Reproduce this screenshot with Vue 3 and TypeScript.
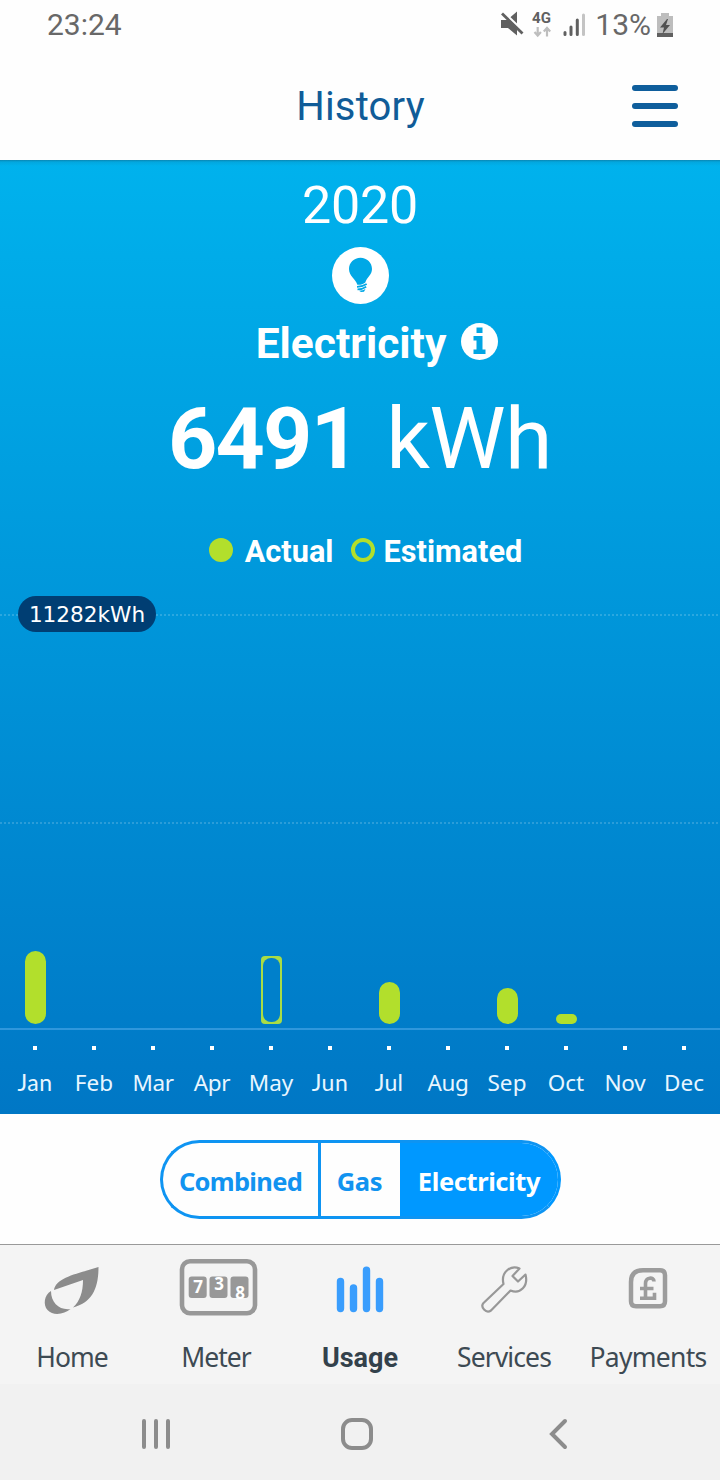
<script setup lang="ts">
interface Month {
  name: string
  height: number
  estimated?: boolean
  spacing: number
}

const months: Month[] = [
  { name: 'Jan', height: 73, spacing: 0.5 },
  { name: 'Feb', height: 0, spacing: 0.1 },
  { name: 'Mar', height: 0, spacing: -0.4 },
  { name: 'Apr', height: 0, spacing: -0.3 },
  { name: 'May', height: 68, estimated: true, spacing: 0 },
  { name: 'Jun', height: 0, spacing: 0.5 },
  { name: 'Jul', height: 42, spacing: 0.3 },
  { name: 'Aug', height: 0, spacing: -0.3 },
  { name: 'Sep', height: 36, spacing: 0.1 },
  { name: 'Oct', height: 10, spacing: 0 },
  { name: 'Nov', height: 0, spacing: -0.2 },
  { name: 'Dec', height: 0, spacing: 0 },
]
</script>

<template>
  <main class="screen">
    <div class="status">
      <span class="clock">23:24</span>
      <svg class="status-icons" width="90" height="40" viewBox="498 5 90 40">
        <g fill="#606060">
          <path d="M501 20h6l10-8.500v24l-9-7.500h-7z" />
          <path d="M503.500 12L523.500 31.500" stroke="#fefefe" stroke-width="2.500" />
          <path d="M502 13.500L522.500 33.500" stroke="#606060" stroke-width="2.800" />
        </g>
        <text x="541.500" y="23" text-anchor="middle" class="network">4G</text>
        <g stroke="#bebebe" stroke-width="2.200" fill="none">
          <path d="M537.700 27v8.500M534.500 32l3.200 3.500 3.200-3.500M547 36.500V28M543.800 31.500l3.200-3.500 3.200 3.500" />
        </g>
        <g stroke-width="3" stroke-linecap="round">
          <path d="M565 32.500v2M571 27v7.500M577.300 20v14.500" stroke="#606060" />
          <path d="M583.500 15v19.500" stroke="#c4c4c4" />
        </g>
      </svg>
      <span class="percent">13%</span>
      <svg class="battery" width="16" height="24" viewBox="0 0 16 24">
        <path d="M4 0h8v3h4v21H0V3h4z" fill="#bdbdbd" />
        <path d="M0 20h16v4H0z" fill="#606060" />
        <path d="M10 6L3 14.500h4L5.500 21 13 12H9l2-6z" fill="#505050" />
      </svg>
    </div>

    <header class="header">
      <h1>History</h1>
      <div class="burger"><i></i><i></i><i></i></div>
    </header>

    <section class="hero">
      <div class="year">2020</div>
      <svg class="bulb" width="57" height="57" viewBox="0 0 57 57">
        <circle cx="28.500" cy="28.500" r="28.500" fill="#fff" />
        <path d="M28.500 10.800C22 10.800 17 15.800 17 22c0 7.500 7 10 8.300 15.800 3 .3 5.700-.4 8-2.200 1.500-5.300 6.700-7.600 6.700-13.600 0-6.200-5-11.200-11.500-11.200z" fill="#00a8e6" />
        <path d="M25 39.800q5.200 0 9.700-2.800M25.500 42.400q4.700 0 8.700-2.700" fill="none" stroke="#00a8e6" stroke-width="1.700" />
        <path d="M27 43.700q4 0 6.500-1.700l-1.500 2.700-3 .3z" fill="#00a8e6" />
      </svg>
      <div class="fuel">
        <span>Electricity</span>
        <svg width="37" height="37" viewBox="0 0 37 37">
          <circle cx="18.500" cy="18.500" r="18.500" fill="#fff" />
          <path d="M15.500 4.500h6v5.500h-6zM12.500 13h9v13.500h3V31h-12v-4.500h3v-9h-3z" fill="#00a5e4" />
        </svg>
      </div>
      <div class="total"><b>6491</b><span>kWh</span></div>
      <div class="legend">
        <i class="dot"></i><span class="actual">Actual</span>
        <i class="dot ring"></i><span class="estimated">Estimated</span>
      </div>

      <div class="chart">
        <div class="ceiling"><span class="pill">11282kWh</span></div>
        <div class="middle"></div>
        <div class="plot">
          <div v-for="m in months" :key="m.name" class="slot">
            <div
              v-if="m.height"
              class="bar"
              :class="{ outline: m.estimated }"
              :style="{ height: m.height + 'px' }"
            ><i v-if="m.estimated"></i></div>
          </div>
        </div>
        <div class="axis">
          <div v-for="m in months" :key="m.name" class="tick">
            <i></i>
            <span
              :class="{ 'short-j': m.name.startsWith('J') }"
              :style="{ letterSpacing: m.spacing + 'px' }"
            >{{ m.name }}</span>
          </div>
        </div>
      </div>
    </section>

    <section class="switch-area">
      <div class="switch">
        <span class="combined">Combined</span>
        <span class="gas">Gas</span>
        <span class="active">Electricity</span>
      </div>
    </section>

    <nav class="tabs">
      <div class="tab home">
        <svg width="144" height="74" viewBox="0 1245 144 74">
          <path d="M98.500 1267C79 1273.500 56 1277 54 1290l29-10c0 12-3 21-10 27.500 19-5 25.500-19 25.500-40.500z" fill="#8c8c8c" />
          <path d="M51 1291c-7 4-8 14-3.500 19 6 6.500 17 4 23-1-11 1.500-19.500-6-19.500-18z" fill="#8c8c8c" />
        </svg>
        <span>Home</span>
      </div>
      <div class="tab meter">
        <svg width="144" height="74" viewBox="144 1245 144 74">
          <rect x="182" y="1261.300" width="73" height="52" rx="8" fill="none" stroke="#989898" stroke-width="4.600" />
          <g fill="#989898">
            <rect x="188.700" y="1276.500" width="18" height="21.500" rx="3" />
            <rect x="209.500" y="1276.500" width="18" height="21.500" rx="3" />
            <rect x="230.500" y="1276.500" width="18" height="21.500" rx="3" />
          </g>
          <g class="digits">
            <text x="197.500" y="1293">7</text>
            <text x="218.500" y="1290">3</text>
            <text x="239.500" y="1298.500">8</text>
          </g>
        </svg>
        <span>Meter</span>
      </div>
      <div class="tab usage">
        <svg width="144" height="74" viewBox="288 1245 144 74">
          <path d="M340.500 1281.500v27M353.500 1288v20.500M366.500 1270.300v38.200M379.500 1281.500v27" stroke="#399dfd" stroke-width="7.400" stroke-linecap="round" />
        </svg>
        <span>Usage</span>
      </div>
      <div class="tab services">
        <svg width="144" height="74" viewBox="432 1245 144 74">
          <path
            d="M519.500 1268.500C511 1264.500 500.500 1272 503.500 1284L483.500 1303c-3.500 4 2.500 11 7.500 7.500l19.500-20c10 4 18-4.500 15-16l-7.500 7-5.500-5.500z"
            fill="none" stroke="#989898" stroke-width="2.200" stroke-linejoin="round"
          />
        </svg>
        <span>Services</span>
      </div>
      <div class="tab payments">
        <svg width="144" height="74" viewBox="576 1245 144 74">
          <path d="M643 1270.300h17q5 0 5 5v26q0 5-5 5h-24q-5 0-5-5V1282q0-11.700 12-11.700z" fill="none" stroke="#9c9c9c" stroke-width="4.500" />
          <path d="M654 1281.500c0-5-8.500-4.500-8.500 2v15M640 1288.500h13.500M640 1298.300h14.500v-5.500" fill="none" stroke="#9c9c9c" stroke-width="3.600" />
        </svg>
        <span>Payments</span>
      </div>
    </nav>

    <footer class="system">
      <svg width="720" height="96" viewBox="0 1384 720 96" fill="none" stroke="#8c8c8c" stroke-width="4" stroke-linecap="round">
        <path d="M144 1421v26M156 1421v26M168 1421v26" />
        <rect x="343" y="1420" width="28" height="28" rx="9" />
        <path d="M565 1421l-13 13 13 13" />
      </svg>
    </footer>
  </main>
</template>

<style>
body {
  margin: 0;
}
</style>

<style scoped>
.screen {
  width: 720px;
  height: 1480px;
  overflow: hidden;
  background: #fefefe;
  font-family: Roboto, "Liberation Sans", sans-serif;
}
svg {
  display: block;
  flex: none;
}
.status {
  height: 50px;
  display: flex;
  align-items: center;
  padding: 0 47px;
  font-size: 30px;
  line-height: 50px;
  color: #686868;
}
.status-icons {
  margin-left: auto;
}
.percent {
  margin: 0 6px 0 7px;
}
.network {
  font: 700 15px Roboto, sans-serif;
  fill: #606060;
}
.header {
  height: 110px;
  box-sizing: border-box;
  padding-top: 4px;
  display: grid;
  grid-template-columns: 88px 1fr 88px;
  align-items: center;
}
.header h1 {
  grid-column: 2;
  margin: 0;
  padding: 0 0 0 1px;
  text-align: center;
  font-size: 40px;
  font-weight: 400;
  line-height: 50px;
  letter-spacing: 0.2px;
  color: #105c98;
}
.burger {
  display: flex;
  flex-direction: column;
  gap: 11.5px;
  padding-bottom: 2px;
}
.burger i {
  width: 46px;
  height: 6.500px;
  border-radius: 3.300px;
  background: #0f5e9c;
}
.hero {
  height: 954px;
  box-sizing: border-box;
  padding-top: 16px;
  display: flex;
  flex-direction: column;
  align-items: center;
  color: #fff;
  background:
    linear-gradient(rgba(20, 90, 120, 0.5), rgba(20, 90, 120, 0.12) 2px, rgba(20, 90, 120, 0) 6px) 0 0 / 100% 6px no-repeat,
    linear-gradient(#00b2ed, #0077c5);
}
.year {
  font-size: 52px;
  line-height: 60px;
  letter-spacing: -0.2px;
}
.bulb {
  margin-top: 11px;
}
.fuel {
  margin-top: 15px;
  padding-left: 34px;
  display: flex;
  gap: 15px;
  font-size: 42.500px;
  font-weight: 700;
  line-height: 50px;
}
.fuel svg {
  margin-top: 3.500px;
}
.total {
  margin-top: 20px;
  display: flex;
  gap: 28px;
  font-size: 86px;
  line-height: 100px;
}
.total b {
  letter-spacing: -1.8px;
}
.total span {
  letter-spacing: -0.5px;
}
.legend {
  margin-top: 43px;
  height: 40px;
  display: flex;
  padding-left: 11px;
  font-size: 30.700px;
  font-weight: 700;
  line-height: 40px;
}
.dot {
  width: 24px;
  height: 24px;
  box-sizing: border-box;
  margin-top: 6px;
  border-radius: 50%;
  background: #b2df2c;
}
.ring {
  background: none;
  border: 4px solid #b2df2c;
}
.actual {
  margin: 0 18px 0 12px;
}
.estimated {
  margin-left: 8px;
}
.chart {
  width: 720px;
  margin-top: 24px;
}
.ceiling {
  height: 36px;
  padding-left: 18px;
  background: repeating-linear-gradient(90deg, rgba(255, 255, 255, 0.17) 0 2px, transparent 2px 4px) 0 18px / 100% 2px no-repeat;
}
.pill {
  display: block;
  width: 138px;
  height: 36px;
  border-radius: 18px;
  background: #003e73;
  text-align: center;
  font: 21.600px/38px "DejaVu Sans", sans-serif;
}
.middle {
  height: 2px;
  margin-top: 190px;
  background: repeating-linear-gradient(90deg, rgba(255, 255, 255, 0.17) 0 2px, transparent 2px 4px);
}
.plot {
  height: 200px;
  padding: 0 6px;
  display: grid;
  grid-template-columns: repeat(12, 59px);
}
.slot {
  display: flex;
  align-items: flex-end;
  justify-content: center;
}
.bar {
  width: 21px;
  border-radius: 10.500px;
  background: #b2df2c;
}
.outline {
  display: flex;
  box-sizing: border-box;
  padding: 2px;
  border-radius: 4px;
  background: #a9dc45;
}
.outline i {
  flex: 1;
  border-radius: 8px;
  background: #0080cb;
}
.axis {
  margin-top: 4px;
  border-top: 2px solid #2f97dc;
  padding: 16px 6px 0 5.500px;
  display: grid;
  grid-template-columns: repeat(12, 59px);
}
.tick {
  display: flex;
  flex-direction: column;
  align-items: center;
  font: 22.500px/30px "Noto Sans", sans-serif;
  color: #e8f6ff;
}
.tick i {
  width: 4px;
  height: 4px;
  margin-bottom: 18px;
  background: #fff;
}
/* Lato keeps the capital J on the baseline */
.short-j {
  font-family: Lato, sans-serif;
  font-size: 23px;
  line-height: 28px;
}
.switch-area {
  height: 130px;
  box-sizing: border-box;
  padding-top: 26px;
}
.switch {
  width: 401px;
  height: 79px;
  box-sizing: border-box;
  margin-left: 160px;
  border: 3px solid #0e94f2;
  border-right-color: #0098ff;
  border-radius: 40px;
  overflow: hidden;
  display: grid;
  grid-template-columns: 158px 79px 1fr;
  text-align: center;
  font: 700 25.500px/77px "Noto Sans", sans-serif;
  letter-spacing: -0.7px;
  color: #1193f0;
}
.combined {
  border-right: 3px solid #0e94f2;
}
.gas {
  padding-right: 2px;
  letter-spacing: -0.3px;
}
.active {
  background: #0098ff;
  color: #fff;
  letter-spacing: -0.4px;
}
.tabs {
  height: 140px;
  box-sizing: border-box;
  border-top: 1px solid #999;
  background: #f4f4f4;
  display: grid;
  grid-template-columns: repeat(5, 144px);
}
.tab {
  display: flex;
  flex-direction: column;
  align-items: center;
  font: 400 26.500px/36px "Noto Sans", sans-serif;
  letter-spacing: -1px;
  color: #3d4a53;
}
.tab span {
  margin-top: 20px;
  white-space: nowrap;
}
.services {
  letter-spacing: -0.9px;
}
.payments {
  letter-spacing: -0.7px;
}
.usage {
  font: 700 27px/38px Roboto, sans-serif;
  letter-spacing: 0;
  color: #33414b;
}
.digits {
  font: 700 17px "Noto Sans", sans-serif;
  text-anchor: middle;
  fill: #fff;
}
.system {
  height: 96px;
  background: #f1f1f1;
}
</style>
